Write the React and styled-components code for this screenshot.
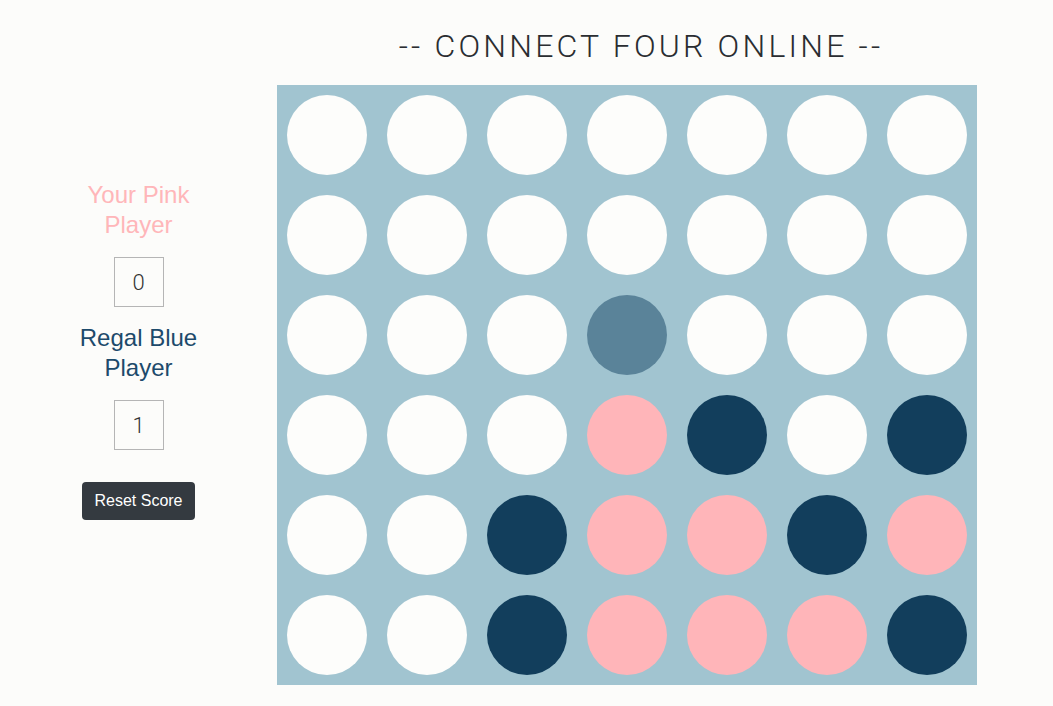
import React from 'react';
import styled, { createGlobalStyle } from 'styled-components';

const GlobalStyle = createGlobalStyle`
  body {
    margin: 0;
    background: #fcfcfa;
    font-family: "Liberation Sans", Arial, sans-serif;
  }
`;

const E = 'empty', P = 'pink', B = 'blue', H = 'hover';

const board = [
  [E, E, E, E, E, E, E],
  [E, E, E, E, E, E, E],
  [E, E, E, H, E, E, E],
  [E, E, E, P, B, E, B],
  [E, E, B, P, P, B, P],
  [E, E, B, P, P, P, B],
];

const colors = {
  empty: '#fdfdfb',
  pink: '#ffb5b9',
  blue: '#123e5c',
  hover: '#5a8399',
};

const Page = styled.div`
  display: flex;
  width: 1053px;
  height: 706px;
`;

const Side = styled.aside`
  width: 277px;
  display: flex;
  flex-direction: column;
  align-items: center;
  padding-top: 180px;
  box-sizing: border-box;
`;

const PlayerName = styled.div`
  font-family: "Liberation Sans", Arial, sans-serif;
  font-size: 24px;
  line-height: 30px;
  text-align: center;
  color: ${p => p.color};
  width: 140px;
`;

const Score = styled.div`
  width: 50px;
  height: 50px;
  box-sizing: border-box;
  border: 1px solid #b5b5b5;
  display: flex;
  align-items: center;
  justify-content: center;
  font-family: Roboto, "Liberation Sans", sans-serif;
  font-weight: 300;
  font-size: 22px;
  color: #333;
  margin: 17px 0 16px;
`;

const ResetButton = styled.button`
  margin-top: 16px;
  height: 38px;
  width: 113px;
  background: #343a40;
  color: #fff;
  border: none;
  border-radius: 4px;
  font-family: "Liberation Sans", Arial, sans-serif;
  font-size: 16px;
  cursor: pointer;
`;

const Main = styled.main`
  display: flex;
  flex-direction: column;
`;

const Title = styled.h1`
  margin: 0;
  height: 85px;
  padding-top: 26px;
  box-sizing: border-box;
  width: 728px;
  text-align: center;
  font-family: Roboto, "Liberation Sans", sans-serif;
  font-weight: 300;
  font-size: 32px;
  letter-spacing: 3.2px;
  line-height: 40px;
  color: #2a2d31;
`;

const Board = styled.div`
  width: 700px;
  height: 600px;
  background: #a1c4d0;
  display: grid;
  grid-template-columns: repeat(7, 100px);
  grid-template-rows: repeat(6, 100px);
`;

const Cell = styled.div`
  display: flex;
  align-items: center;
  justify-content: center;
`;

const Disc = styled.div`
  width: 80px;
  height: 80px;
  border-radius: 50%;
  background: ${p => colors[p.kind]};
`;

export default function App() {
  return (
    <Page>
      <GlobalStyle />
      <Side>
        <PlayerName color="#ffb6b9">Your Pink Player</PlayerName>
        <Score>0</Score>
        <PlayerName color="#1d4a6b">Regal Blue Player</PlayerName>
        <Score>1</Score>
        <ResetButton>Reset Score</ResetButton>
      </Side>
      <Main>
        <Title>-- CONNECT FOUR ONLINE --</Title>
        <Board>
          {board.map((row, r) =>
            row.map((kind, c) => (
              <Cell key={`${r}-${c}`}>
                <Disc kind={kind} />
              </Cell>
            ))
          )}
        </Board>
      </Main>
    </Page>
  );
}
